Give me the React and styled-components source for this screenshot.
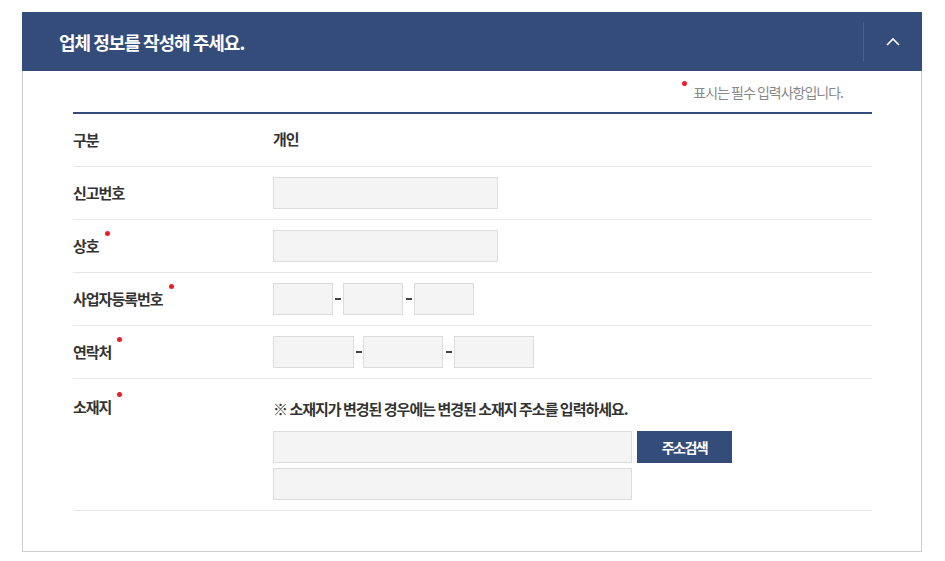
import styled, { createGlobalStyle, css } from "styled-components"

const GlobalStyle = createGlobalStyle`
  body {
    margin: 0;
    background: #fff;
    font-family: "Noto Sans CJK KR", "Noto Sans", sans-serif;
    color: #333;
  }
  * { box-sizing: border-box; }
`

const Page = styled.div`
  padding: 12px 22px;
`

const Card = styled.section`
  width: 900px;
`

const Header = styled.header`
  display: flex;
  align-items: center;
  height: 59px;
  background: #344c7a;
  padding-left: 37px;
`

const Title = styled.h2`
  flex: 1;
  margin: 0;
  color: #fff;
  font-size: 18px;
  font-weight: 700;
  letter-spacing: -1px;
`

const Toggle = styled.button`
  display: flex;
  align-items: center;
  justify-content: center;
  width: 59px;
  height: 39px;
  padding: 0;
  background: none;
  border: none;
  border-left: 1px solid rgba(255, 255, 255, 0.12);
  cursor: pointer;
`

const Body = styled.div`
  border: 1px solid #cfcfcf;
  border-top: none;
  padding: 0 49px 40px 50px;
`

const RequiredNote = styled.p`
  margin: 0;
  padding: 11px 29px 10px 0;
  text-align: right;
  font-size: 14px;
  line-height: 20px;
  letter-spacing: -1px;
  color: #888;
`

const Dot = styled.span`
  position: relative;
  ${(p) =>
    p.required &&
    css`
      &::after {
        content: "";
        position: absolute;
        width: 5px;
        height: 5px;
        border-radius: 50%;
        background: #ee1c24;
        ${p.lead
          ? css`
              left: -11px;
              top: -1px;
            `
          : css`
              right: -11px;
              top: -4px;
            `}
      }
    `}
`

const Form = styled.div`
  border-top: 2px solid #344c7a;
`

const Row = styled.div`
  display: grid;
  grid-template-columns: 200px 1fr;
  align-items: ${(p) => (p.top ? "start" : "center")};
  min-height: 53px;
  border-bottom: 1px solid #e6e6e6;
`

const Label = styled.div`
  font-size: 15px;
  font-weight: 700;
  line-height: 20px;
  letter-spacing: -1px;
  color: #333;
  padding-top: ${(p) => (p.top ? "18px" : "0")};
`

const Value = styled.div`
  display: flex;
  flex-direction: ${(p) => (p.column ? "column" : "row")};
  align-items: ${(p) => (p.column ? "flex-start" : "center")};
  padding: ${(p) => (p.column ? "20px 0 10px" : "10px 0")};
  font-size: 15px;
  font-weight: 700;
  letter-spacing: -1px;
  color: #333;
`

const Text = styled.span`
  line-height: 20px;
  margin-top: -2px;
`

const Input = styled.input`
  width: ${(p) => p.w}px;
  height: 32px;
  margin: 0;
  padding: 0 8px;
  background: #f4f4f4;
  border: 1px solid #dcdcdc;
  font-family: inherit;
  font-size: 13px;
  outline: none;
`

const Sep = styled.span`
  display: flex;
  justify-content: center;
  width: ${(p) => p.w || 10}px;

  &::before {
    content: "";
    width: 6px;
    height: 2px;
    background: #444;
  }
`

const Notice = styled.p`
  margin: 0 0 12px;
  font-size: 15px;
  font-weight: 700;
  line-height: 20px;
  letter-spacing: -1px;
  color: #333;
`

const Line = styled.div`
  display: flex;
  gap: 5px;
  margin-bottom: ${(p) => (p.gap ? "5px" : "0")};
`

const SearchButton = styled.button`
  width: 95px;
  height: 32px;
  background: #344c7a;
  border: none;
  color: #fff;
  font-family: inherit;
  font-size: 14px;
  font-weight: 700;
  letter-spacing: -1.5px;
  cursor: pointer;
`

function ChevronUp() {
  return (
    <svg width="14" height="9" viewBox="0 0 14 9" fill="none">
      <polyline points="1,8 7,2 13,8" stroke="#fff" strokeWidth="1.6" />
    </svg>
  )
}

export default function App() {
  return (
    <Page>
      <GlobalStyle />
      <Card>
        <Header>
          <Title>업체 정보를 작성해 주세요.</Title>
          <Toggle aria-label="접기">
            <ChevronUp />
          </Toggle>
        </Header>
        <Body>
          <RequiredNote>
            <Dot required lead>
              표시는 필수 입력사항입니다.
            </Dot>
          </RequiredNote>
          <Form>
            <Row>
              <Label>구분</Label>
              <Value>
                <Text>개인</Text>
              </Value>
            </Row>
            <Row>
              <Label>신고번호</Label>
              <Value>
                <Input w={225} />
              </Value>
            </Row>
            <Row>
              <Label>
                <Dot required>상호</Dot>
              </Label>
              <Value>
                <Input w={225} />
              </Value>
            </Row>
            <Row>
              <Label>
                <Dot required>사업자등록번호</Dot>
              </Label>
              <Value>
                <Input w={60} />
                <Sep />
                <Input w={60} />
                <Sep w={11} />
                <Input w={60} />
              </Value>
            </Row>
            <Row>
              <Label>
                <Dot required>연락처</Dot>
              </Label>
              <Value>
                <Input w={81} />
                <Sep w={9} />
                <Input w={80} />
                <Sep w={11} />
                <Input w={80} />
              </Value>
            </Row>
            <Row top>
              <Label top>
                <Dot required>소재지</Dot>
              </Label>
              <Value column>
                <Notice>※ 소재지가 변경된 경우에는 변경된 소재지 주소를 입력하세요.</Notice>
                <Line gap>
                  <Input w={359} />
                  <SearchButton>주소검색</SearchButton>
                </Line>
                <Line>
                  <Input w={359} />
                </Line>
              </Value>
            </Row>
          </Form>
        </Body>
      </Card>
    </Page>
  )
}
